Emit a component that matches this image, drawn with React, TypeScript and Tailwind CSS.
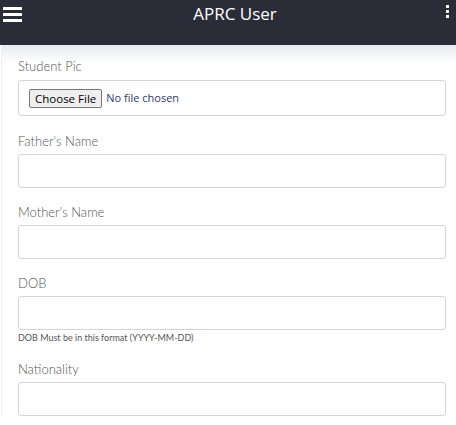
const labelCls = "block h-5 text-[13px] font-light leading-5 text-[#555]";
const inputCls =
  "block w-full rounded-[3px] border border-[#d3d3df] bg-white px-2 text-[13px] outline-none";

function Field({ label, help }: { label: string; help?: string }) {
  return (
    <div className={help ? "mb-[15px]" : "mb-[14px]"}>
      <label className={labelCls}>{label}</label>
      <input type="text" className={`${inputCls} mt-[3px] h-[34px]`} />
      {help ? (
        <p className="mt-[2px] h-3 text-[9px] leading-3 text-[#555]">{help}</p>
      ) : null}
    </div>
  );
}

export default function App() {
  return (
    <div className="min-h-[425px] bg-white" style={{ fontFamily: "Lato, 'Open Sans', sans-serif" }}>
      <header className="h-[45px] bg-[#2a2d38]">
        <div className="relative flex h-[28px] items-center justify-center">
          <button type="button" className="absolute left-[3px] top-[7px] flex w-[19px] flex-col gap-[3px]">
            <span className="block h-[3px] w-full bg-white" />
            <span className="block h-[3px] w-full bg-white" />
            <span className="block h-[3px] w-full bg-white" />
          </button>
          <h1
            className="ml-[14px] text-[17px] font-normal text-white"
            style={{ fontFamily: "'Open Sans', sans-serif" }}
          >
            APRC User
          </h1>
          <button type="button" className="absolute left-[446px] top-[5px] flex flex-col gap-[2px]">
            <span className="block h-[3px] w-[3px] bg-white" />
            <span className="block h-[3px] w-[3px] bg-white" />
            <span className="block h-[3px] w-[3px] bg-white" />
          </button>
        </div>
      </header>

      <main className="ml-px border-l border-[#eeeeee] bg-[linear-gradient(to_bottom,#e8eaed,#ffffff_18px)] pl-4 pr-[10px] pt-[11px]">
        <div className="mb-[15px]">
          <label className={labelCls}>Student Pic</label>
          <div className={`${inputCls} mt-1 flex h-[36px] items-center px-[10px]`}>
            <span
              className="rounded-[2px] border border-[#767676] bg-[#efefef] px-[5px] text-[11.5px] leading-[17px] text-black"
              style={{ fontFamily: "'Open Sans', sans-serif" }}
            >
              Choose File
            </span>
            <span
              className="ml-[4px] text-[11px] text-[#2f3b6b]"
              style={{ fontFamily: "'Open Sans', sans-serif" }}
            >
              No file chosen
            </span>
          </div>
        </div>

        <Field label="Father's Name" />
        <Field label="Mother's Name" />
        <Field label="DOB" help="DOB Must be in this format (YYYY-MM-DD)" />
        <Field label="Nationality" />
      </main>
    </div>
  );
}
